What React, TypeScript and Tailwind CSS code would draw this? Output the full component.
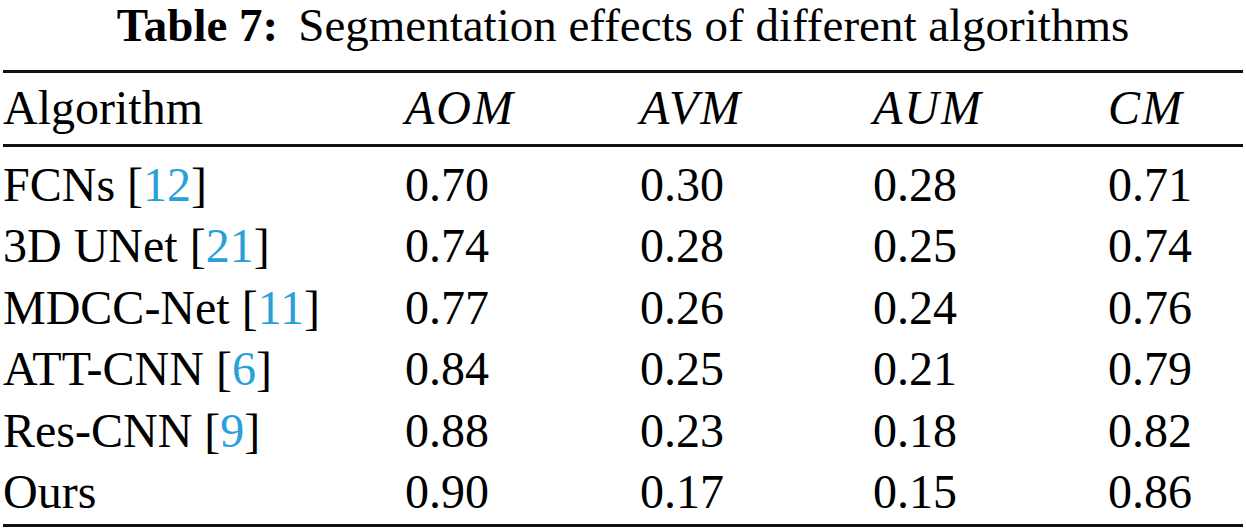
import React from 'react';

const rows = [
  { name: 'FCNs', ref: '12', v: ['0.70', '0.30', '0.28', '0.71'] },
  { name: '3D UNet', ref: '21', v: ['0.74', '0.28', '0.25', '0.74'] },
  { name: 'MDCC-Net', ref: '11', v: ['0.77', '0.26', '0.24', '0.76'] },
  { name: 'ATT-CNN', ref: '6', v: ['0.84', '0.25', '0.21', '0.79'] },
  { name: 'Res-CNN', ref: '9', v: ['0.88', '0.23', '0.18', '0.82'] },
  { name: 'Ours', ref: '', v: ['0.90', '0.17', '0.15', '0.86'] },
];

const cols = 'grid grid-cols-[402px_235px_233px_235px_1fr]';

const App = () => {
  return (
    <div className="w-[1246px] h-[530px] bg-white text-black font-['Liberation_Serif',serif] overflow-hidden">
      <h1 className="h-[70px] pt-[2px] text-center text-[47px] leading-[46px] font-normal">
        <span className="font-bold">Table 7:</span>
        <span className="ml-[20px]">Segmentation effects of different algorithms</span>
      </h1>
      <div className="mx-[3px] border-t-[3px] border-b-[3px] border-[#111]">
        <div className={`${cols} pt-[4px] pb-[6px] border-b-[3px] border-[#111] text-[48px] leading-[61px]`}>
          <div>Algorithm</div>
          <div className="italic tracking-[2px]">AOM</div>
          <div className="italic tracking-[2px]">AVM</div>
          <div className="italic tracking-[2px]">AUM</div>
          <div className="italic tracking-[2px]">CM</div>
        </div>
        <div className="pt-[7px] pb-[2px] text-[48px] leading-[61.4px]">
          {rows.map((r) => (
            <div key={r.name} className={cols}>
              <div>
                {r.name}
                {r.ref && (
                  <>
                    {' '}[<span className="text-[#29a0da]">{r.ref}</span>]
                  </>
                )}
              </div>
              {r.v.map((x, i) => (
                <div key={i}>{x}</div>
              ))}
            </div>
          ))}
        </div>
      </div>
    </div>
  );
};

export default App;
